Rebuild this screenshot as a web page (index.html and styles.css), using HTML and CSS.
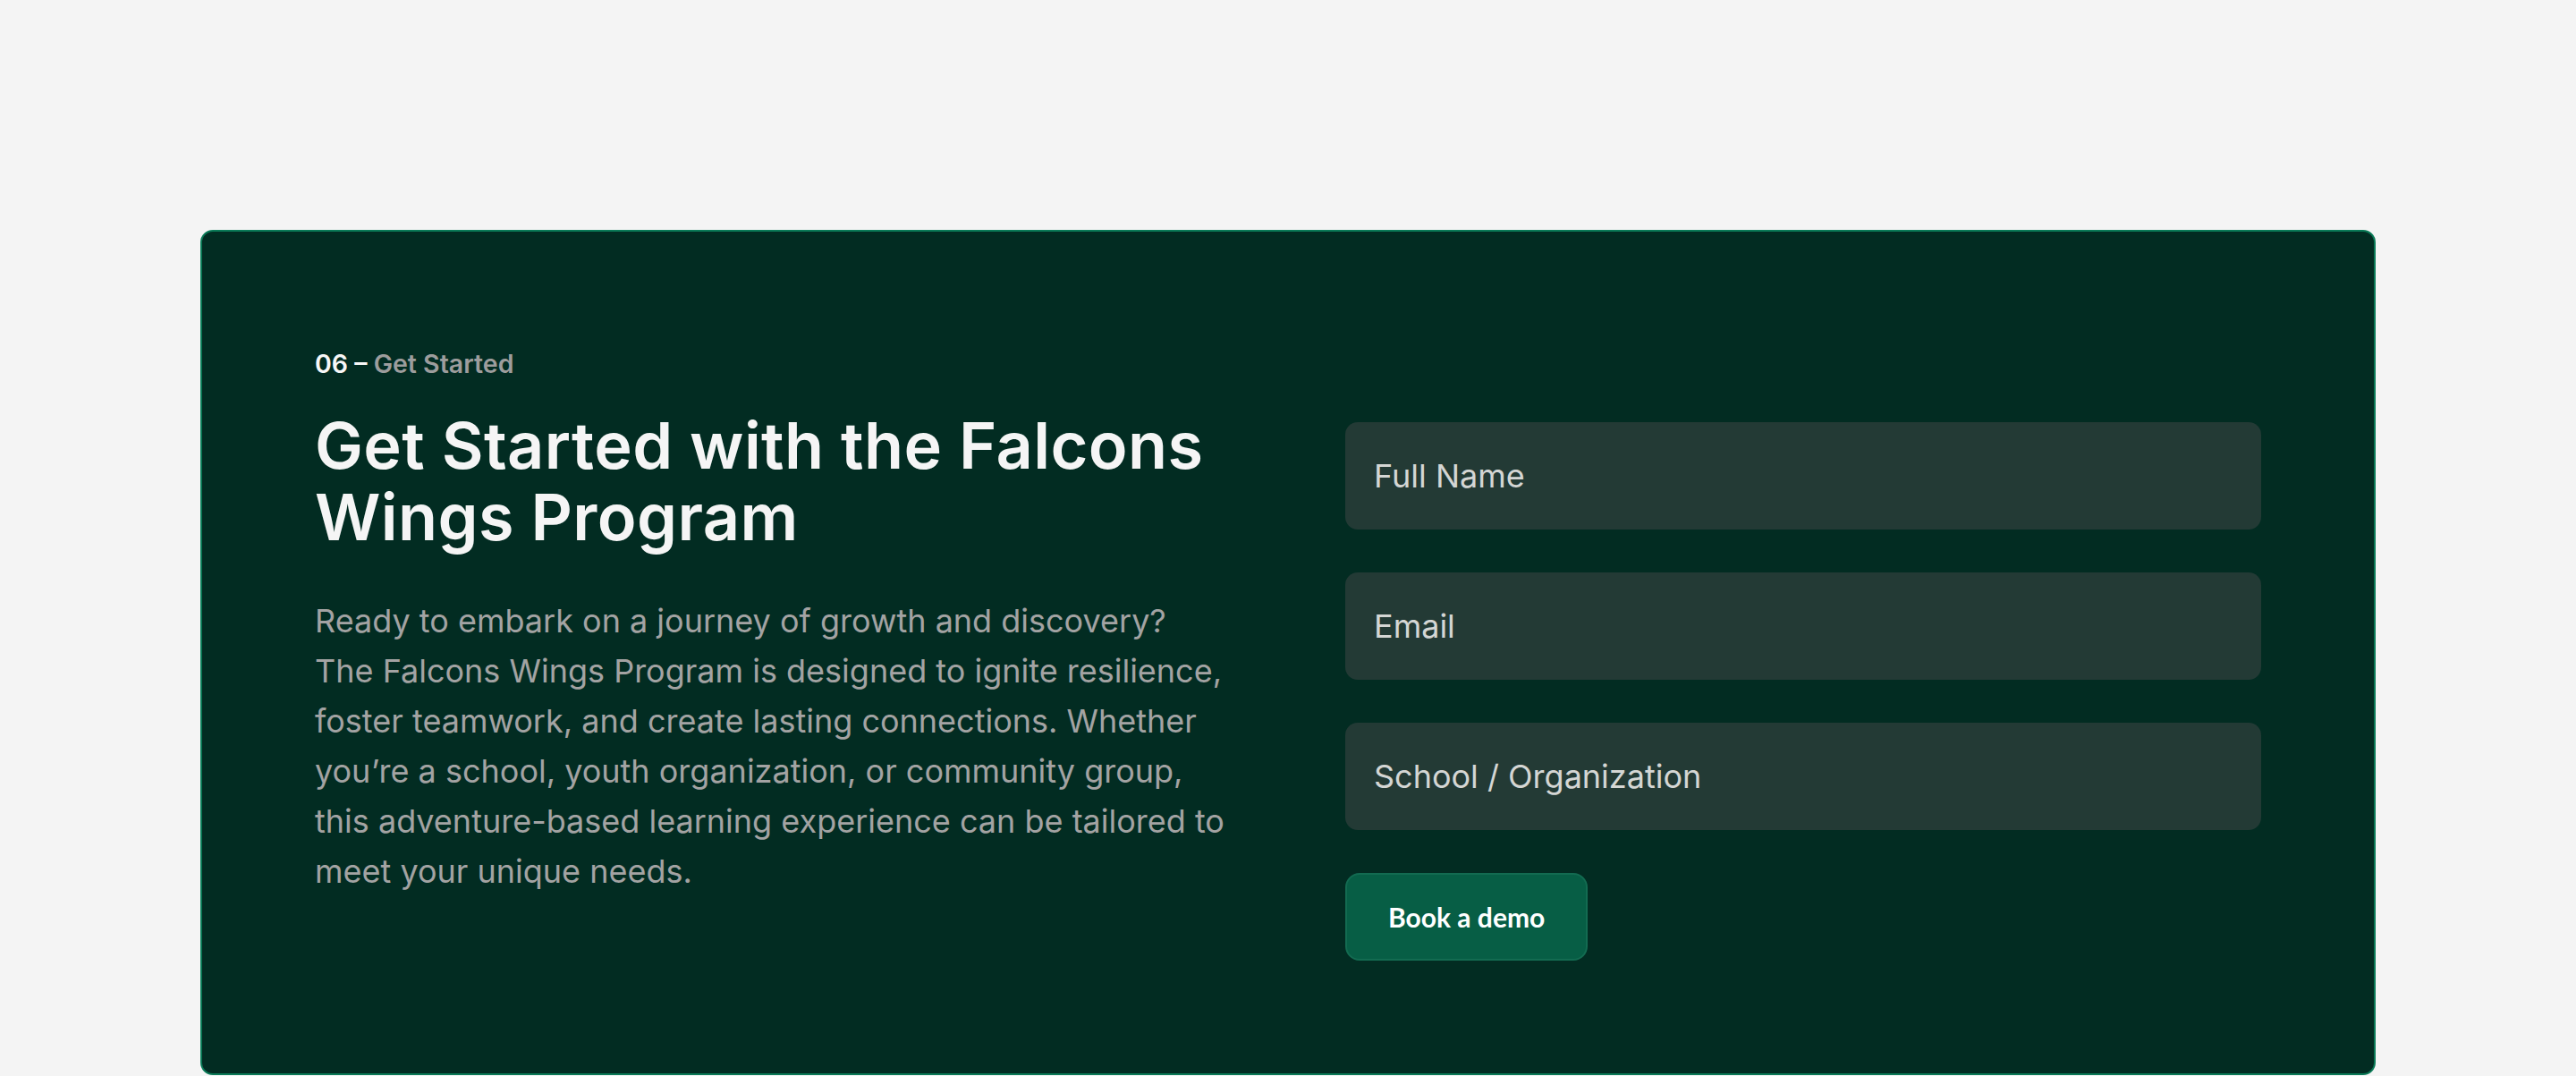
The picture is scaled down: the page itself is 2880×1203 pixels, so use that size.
FILE: index.html
```html
<!DOCTYPE html>
<html lang="en">
<head>
<meta charset="utf-8">
<title>Get Started</title>
<link rel="stylesheet" href="styles.css">
</head>
<body>
<section class="section">
  <div class="card">
    <div class="intro">
      <p class="eyebrow"><span class="num">06 –</span> <span class="tag">Get Started</span></p>
      <h2 class="title">Get Started with the Falcons Wings Program</h2>
      <p class="text">Ready to embark on a journey of growth and discovery?<br>The Falcons Wings Program is designed to ignite resilience, foster teamwork, and create lasting connections. Whether you’re a school, youth organization, or community group, this adventure-based learning experience can be tailored to meet your unique needs.</p>
    </div>
    <form class="form">
      <input class="field" type="text" placeholder="Full Name">
      <input class="field" type="email" placeholder="Email">
      <input class="field" type="text" placeholder="School / Organization">
      <button class="btn" type="button">Book a demo</button>
    </form>
  </div>
</section>
</body>
</html>
```
FILE: styles.css
```css
* { box-sizing: border-box; }
html, body { margin: 0; padding: 0; }
body {
  background: #f4f4f4;
  font-family: Inter, "Noto Sans", sans-serif;
}
.section {
  padding: 257px 224px 0;
}
.card {
  background: #022c22;
  border: 2px solid #0a7a57;
  border-radius: 14px;
  padding: 128px 126px 126px;
  display: grid;
  grid-template-columns: 1fr 1fr;
  column-gap: 128px;
}
.intro { min-width: 0; }
.eyebrow {
  margin: 0;
  font-size: 28.5px;
  line-height: 39px;
  font-weight: 600;
}
.num { color: #f7f7f7; }
.tag { color: #9d9d9d; }
.title {
  margin: 32px 0 0;
  font-size: 72px;
  line-height: 80px;
  font-weight: 600;
  color: #f5f5f5;
  letter-spacing: 0.4px;
}
.text {
  margin: 48px 0 0;
  font-size: 36px;
  line-height: 56px;
  font-weight: 400;
  color: #a3a3a3;
}
.form {
  padding-top: 85px;
  display: flex;
  flex-direction: column;
  align-items: flex-start;
  gap: 48px;
}
.field {
  width: 100%;
  height: 120px;
  border: none;
  border-radius: 14px;
  background: #233a35;
  padding: 0 32px;
  font-family: Inter, "Noto Sans", sans-serif;
  font-size: 36px;
  color: #d6d8d6;
  outline: none;
}
.field::placeholder { color: #d4d6d4; opacity: 1; }
.btn {
  border: 2px solid #136b51;
  background: #075e45;
  color: #ffffff;
  border-radius: 16px;
  font-family: Lato, "Noto Sans", sans-serif;
  font-weight: 700;
  font-size: 30px;
  line-height: 36px;
  padding: 29px 46px;
  cursor: pointer;
}
```
